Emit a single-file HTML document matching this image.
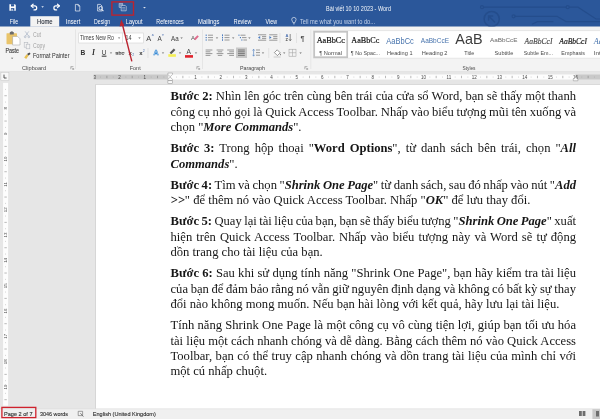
<!DOCTYPE html>
<html><head><meta charset="utf-8"><title>Word</title>
<style>
html,body{margin:0;padding:0;background:#e6e6e6;}
body{width:600px;height:419px;overflow:hidden;position:relative;font-family:"Liberation Sans",sans-serif;}
#app{position:absolute;left:0;top:0;width:600px;height:419px;overflow:hidden;background:#e6e6e6;}
.abs{position:absolute;}
#page{left:94.5px;top:83.7px;width:505.5px;height:325px;background:#fff;border-left:0.6px solid #d6d6d6;border-top:0.6px solid #dadada;}
#docwrap{position:absolute;left:0;top:0;width:600px;height:419px;will-change:transform;}
#doc{position:absolute;left:0;top:0;width:2400px;height:1676px;transform:scale(0.25);transform-origin:0 0;}
.ln{position:absolute;left:682px;height:62px;line-height:62px;font-family:"Liberation Serif",serif;font-size:50.4px;color:#161616;white-space:nowrap;}
#chrome{will-change:transform;position:absolute;left:0;top:0;width:600px;height:419px;}
#chrome text{font-family:"Liberation Sans",sans-serif;}
#chrome .sf{font-family:"Liberation Serif",serif;}
</style></head><body>
<div id="app">
<div id="page" class="abs"></div>
<div id="docwrap"><div id="doc">
<div class="ln" style="top:353.1px;word-spacing:-0.03px"><b>Bước 2:</b> Nhìn lên góc trên cùng bên trái của cửa sổ Word, bạn sẽ thấy một thanh</div>
<div class="ln" style="top:415.1px;word-spacing:-1.15px">công cụ nhỏ gọi là Quick Access Toolbar. Nhấp vào biểu tượng mũi tên xuống và</div>
<div class="ln" style="top:477.1px">chọn "<b><i>More Commands</i></b>".</div>
<div class="ln" style="top:561.1px;word-spacing:7.39px"><b>Bước 3:</b> Trong hộp thoại "<b>Word Options</b>", từ danh sách bên trái, chọn "<b><i>All</i></b></div>
<div class="ln" style="top:623.1px"><b><i>Commands</i></b>".</div>
<div class="ln" style="top:707.1px;word-spacing:-2.33px"><b>Bước 4:</b> Tìm và chọn "<b><i>Shrink One Page</i></b>" từ danh sách, sau đó nhấp vào nút "<b><i>Add</i></b></div>
<div class="ln" style="top:769.1px"><b><i>&gt;&gt;</i></b>" để thêm nó vào Quick Access Toolbar. Nhấp "<b><i>OK</i></b>" để lưu thay đổi.</div>
<div class="ln" style="top:853.1px;word-spacing:-2.76px"><b>Bước 5:</b> Quay lại tài liệu của bạn, bạn sẽ thấy biểu tượng "<b><i>Shrink One Page</i></b>" xuất</div>
<div class="ln" style="top:915.1px;word-spacing:3.67px">hiện trên Quick Access Toolbar. Nhấp vào biểu tượng này và Word sẽ tự động</div>
<div class="ln" style="top:977.1px">dồn trang cho tài liệu của bạn.</div>
<div class="ln" style="top:1061.1px;word-spacing:0.31px"><b>Bước 6:</b> Sau khi sử dụng tính năng "Shrink One Page", bạn hãy kiểm tra tài liệu</div>
<div class="ln" style="top:1123.1px;word-spacing:-2.02px">của bạn để đảm bảo rằng nó vẫn giữ nguyên định dạng và không có bất kỳ sự thay</div>
<div class="ln" style="top:1185.1px">đổi nào không mong muốn. Nếu bạn hài lòng với kết quả, hãy lưu lại tài liệu.</div>
<div class="ln" style="top:1269.1px;word-spacing:0.36px">Tính năng Shrink One Page là một công cụ vô cùng tiện lợi, giúp bạn tối ưu hóa</div>
<div class="ln" style="top:1331.1px;word-spacing:-0.08px">tài liệu một cách nhanh chóng và dễ dàng. Bằng cách thêm nó vào Quick Access</div>
<div class="ln" style="top:1393.1px;word-spacing:1.32px">Toolbar, bạn có thể truy cập nhanh chóng và dồn trang tài liệu của mình chỉ với</div>
<div class="ln" style="top:1453.1px">một cú nhấp chuột.</div>
</div></div>
<svg id="chrome" width="600" height="419" viewBox="0 0 600 419">
<g id="titlebar">
<rect x="0" y="0" width="600" height="26.7" fill="#2b579a"/>
<!-- decorative circuit pattern -->
<g fill="none" stroke="#244d8c" stroke-width="1.2" stroke-linecap="round">
<path d="M483.6 7.2 H566 M569.4 7.2 H578 L596 19 H600"/>
<circle cx="482" cy="7.2" r="1.5"/>
<circle cx="567.7" cy="7.2" r="1.5"/>
<path d="M515.2 16.3 H557 L566 21.6 H600"/>
<circle cx="513.6" cy="16.3" r="1.5"/>
<circle cx="491.7" cy="19" r="7.6" stroke-width="1.5"/>
<path d="M494.6 22 L488.6 16 M488.6 20 V16 H492.6" stroke-width="1.5"/>
<path d="M532.5 24 L537.4 21.6 H553"/>
</g>
<!-- save -->
<g>
<path d="M9.4 4.2 H14.9 L15.8 5.1 V10.7 H9.4 Z" fill="#fff"/>
<rect x="11" y="4.2" width="3.1" height="2.2" fill="#2b579a"/>
<rect x="10.9" y="8.1" width="3.4" height="2.6" fill="#2b579a"/>
<rect x="11.6" y="8.9" width="1" height="1.8" fill="#fff"/>
</g>
<!-- undo -->
<g fill="none" stroke="#fff" stroke-width="1.25" stroke-linecap="round" stroke-linejoin="round">
<path d="M31.4 5.9 H34.7 A2 2 0 0 1 34.7 9.9 H34"/>
<path d="M33.1 4.2 L31.2 5.9 L33.1 7.6"/>
</g>
<path d="M41.3 6.3 h2.6 l-1.3 1.5 z" fill="#e6ecf6"/>
<!-- redo -->
<g fill="none" stroke="#fff" stroke-width="1.25" stroke-linecap="round" stroke-linejoin="round">
<path d="M59.2 5.9 H55.9 A2 2 0 0 0 55.9 9.9 H56.6"/>
<path d="M57.5 4.2 L59.4 5.9 L57.5 7.6"/>
</g>
<!-- new doc -->
<g fill="none" stroke="#eef2f8" stroke-width="0.7" stroke-linejoin="round">
<path d="M75.4 4.4 H78.2 L79.8 6 V11 H75.4 Z"/>
<path d="M78.2 4.4 V6 H79.8"/>
</g>
<!-- print preview -->
<g fill="none" stroke="#eef2f8" stroke-width="0.7" stroke-linejoin="round">
<path d="M97.6 4.4 H100.4 L102 6 V11 H97.6 Z"/>
<circle cx="100.6" cy="8.2" r="1.7" stroke-width="0.9"/>
<path d="M101.9 9.5 L103.4 11.2" stroke-width="1.1"/>
</g>
<!-- shrink one page -->
<g fill="none" stroke="#d5deed" stroke-width="0.65" stroke-linejoin="round">
<path d="M119.2 3.4 H122.6 V7.4 H119.2 Z"/>
<path d="M121.2 5.4 H125.2 L126.2 6.4 V10.8 H121.2 Z" fill="#2b579a"/>
<path d="M122.2 7.6 H125 M122.2 9 H125" stroke-width="0.5"/>
<path d="M119.6 4.6 H122 M119.6 5.8 H121" stroke-width="0.5"/>
</g>
<path d="M143.1 6.9 h2.8 l-1.4 1.6 z" fill="#dfe6f2"/>
<!-- title text -->
<text x="326" y="10.7" font-size="6.8" fill="#f4f7fb" textLength="65" lengthAdjust="spacingAndGlyphs">Bài viết 10 10 2023 - Word</text>
<!-- tabs -->
<path d="M30.3 26.7 V16.2 H59.2 V26.7 Z" fill="#f3f3f3"/>
<g font-size="6.8" fill="#fff">
<text x="9.7" y="24.0" textLength="8.4" lengthAdjust="spacingAndGlyphs">File</text>
<text x="37" y="24.0" textLength="15.6" lengthAdjust="spacingAndGlyphs" fill="#2e3440" stroke="#2e3440" stroke-width="0.12">Home</text>
<text x="65.8" y="24.0" textLength="14.5" lengthAdjust="spacingAndGlyphs">Insert</text>
<text x="94" y="24.0" textLength="16.2" lengthAdjust="spacingAndGlyphs">Design</text>
<text x="125.8" y="24.0" textLength="16.7" lengthAdjust="spacingAndGlyphs">Layout</text>
<text x="156.3" y="24.0" textLength="27.5" lengthAdjust="spacingAndGlyphs">References</text>
<text x="198" y="24.0" textLength="21.5" lengthAdjust="spacingAndGlyphs">Mailings</text>
<text x="233.8" y="24.0" textLength="17.5" lengthAdjust="spacingAndGlyphs">Review</text>
<text x="265.5" y="24.0" textLength="11.5" lengthAdjust="spacingAndGlyphs">View</text>
<text x="300" y="23.7" font-size="6.5" fill="#c5d3ea" textLength="75" lengthAdjust="spacingAndGlyphs">Tell me what you want to do...</text>
</g>
<!-- light bulb -->
<g fill="none" stroke="#dfe6f2" stroke-width="0.7">
<path d="M292.9 22.6 C292.9 21.4 291.7 21 291.7 19.6 A2.2 2.2 0 0 1 296.1 19.6 C296.1 21 294.9 21.4 294.9 22.6 Z"/>
<path d="M293 23.8 H294.8"/>
</g>
</g>

<g id="ribbon">
<rect x="0" y="26.7" width="600" height="44.5" fill="#f3f3f3"/>
<rect x="0" y="71.1" width="600" height="0.5" fill="#dedede"/>
<!-- group separators -->
<g stroke="#dcdcdc" stroke-width="0.6">
<path d="M75.5 29.5 V69 M202.5 29.5 V69 M310.8 29.5 V69"/>
<path d="M148 48 V58 M268.7 48 V58 M280 33 V43 M296.5 33 V43" stroke="#d8d8d8"/>
</g>
<!-- Paste icon -->
<g transform="translate(0 1.6)">
<rect x="6.5" y="31.6" width="10.5" height="11" rx="0.6" fill="#e9c46a"/>
<rect x="9.8" y="30.3" width="4" height="2.6" rx="0.5" fill="#6b6b6b"/>
<rect x="10.8" y="29.8" width="2" height="1.2" fill="#6b6b6b"/>
<path d="M12.6 34.8 H17.6 L20 37.2 V43.4 H12.6 Z" fill="#fff" stroke="#9a9a9a" stroke-width="0.5"/>
</g>
<text x="5.5" y="53" font-size="6.5" fill="#303030" stroke="#303030" stroke-width="0.1" textLength="13.5" lengthAdjust="spacingAndGlyphs">Paste</text>
<path d="M10.9 57.7 h2.4 l-1.2 1.4 z" fill="#666"/>
<!-- Cut -->
<g stroke="#a9b4c6" stroke-width="0.7" fill="none">
<path d="M25.2 31.4 L28.6 36 M28.8 31.4 L25.4 36"/>
<circle cx="25.2" cy="36.8" r="0.9"/><circle cx="28.8" cy="36.8" r="0.9"/>
</g>
<text x="33" y="36.5" font-size="6.5" fill="#a3a3a3" textLength="8" lengthAdjust="spacingAndGlyphs">Cut</text>
<!-- Copy -->
<g stroke="#b5b9c0" stroke-width="0.6" fill="#f3f3f3">
<rect x="24.2" y="42.6" width="3.6" height="4.6"/>
<rect x="26.2" y="44.2" width="3.6" height="4.6"/>
</g>
<text x="33" y="47.8" font-size="6.5" fill="#a3a3a3" textLength="12" lengthAdjust="spacingAndGlyphs">Copy</text>
<!-- Format painter -->
<g>
<path d="M24.2 57.6 L26.6 54.2 L28.6 55.6 L26.2 59 Z" fill="#e8c052"/>
<path d="M27 54 L29.4 52.4 L30.6 53.8 L28.6 55.6 Z" fill="#4b4b4b"/>
</g>
<text x="33" y="58.3" font-size="6.5" fill="#2f2f2f" textLength="36.5" lengthAdjust="spacingAndGlyphs">Format Painter</text>
<text x="22" y="69.6" font-size="6.2" fill="#484848" textLength="24" lengthAdjust="spacingAndGlyphs">Clipboard</text>
<path d="M70.8 66.6 H73.4 M70.8 66.6 V69.2 M71.8 67.6 L73.6 69.4 M73.6 68 V69.4 H72.2" stroke="#777" stroke-width="0.5" fill="none"/>
<!-- Font boxes -->
<rect x="78.7" y="33" width="43.8" height="10" fill="#fff" stroke="#d4d4d4" stroke-width="0.6"/>
<rect x="122.5" y="33" width="20.8" height="10" fill="#fff" stroke="#d4d4d4" stroke-width="0.6"/>
<text x="80" y="40.1" font-size="6.5" fill="#3a3a3a" textLength="34" lengthAdjust="spacingAndGlyphs">Times New Ro</text>
<path d="M117.9 37.4 h2.4 l-1.2 1.4 z" fill="#666"/>
<text x="125.4" y="40.1" font-size="6.5" fill="#3a3a3a" textLength="6" lengthAdjust="spacingAndGlyphs">14</text>
<path d="M138.3 37.4 h2.4 l-1.2 1.4 z" fill="#666"/>
<!-- grow/shrink font -->
<text x="146.2" y="41" font-size="7.4" fill="#3d3d3d">A</text>
<path d="M151.6 35.6 l1.2 -1.5 l1.2 1.5 z" fill="#4a6fb0"/>
<text x="157.4" y="41" font-size="6.4" fill="#3d3d3d">A</text>
<path d="M161.8 34.4 l1.1 1.4 l1.1 -1.4 z" fill="#4a6fb0"/>
<text x="171" y="40.6" font-size="6.4" fill="#3d3d3d" textLength="7.6" lengthAdjust="spacingAndGlyphs">Aa</text>
<path d="M180.4 37.4 h2.4 l-1.2 1.4 z" fill="#666"/>
<!-- clear formatting -->
<text x="191" y="40.4" font-size="6" fill="#555">A</text>
<path d="M194 38.8 L197.4 35.2 L198.8 36.6 L195.4 40.2 Z" fill="#e06a8c"/>
<!-- row 2 -->
<text x="80.6" y="55" font-size="6.6" font-weight="bold" fill="#333">B</text>
<text x="92" y="55.2" font-size="7.6" font-style="italic" font-weight="bold" class="sf" fill="#333">I</text>
<text x="101.8" y="54.8" font-size="6.4" fill="#333" text-decoration="underline">U</text>
<path d="M101.8 56.2 H106.4" stroke="#333" stroke-width="0.6"/>
<path d="M109.8 52.4 h2.4 l-1.2 1.4 z" fill="#666"/>
<text x="115.6" y="54.6" font-size="5.2" fill="#444" textLength="8.6" lengthAdjust="spacingAndGlyphs">abc</text>
<path d="M115 52.9 H124.8" stroke="#444" stroke-width="0.6"/>
<text x="128.6" y="54.8" font-size="6" font-weight="bold" fill="#333">x</text>
<text x="132.2" y="56.4" font-size="3.6" fill="#4a6fb0">2</text>
<text x="139.2" y="54.8" font-size="6" font-weight="bold" fill="#333">x</text>
<text x="142.8" y="52.2" font-size="3.6" fill="#4a6fb0">2</text>
<!-- glow A -->
<text x="153.6" y="55.2" font-size="7" font-weight="bold" fill="#fff" stroke="#3a8bd4" stroke-width="0.6">A</text>
<path d="M161.8 52.4 h2.4 l-1.2 1.4 z" fill="#666"/>
<!-- highlight -->
<path d="M169.6 52.8 L173.8 48.6 L175.4 50 L171.2 54.2 Z" fill="#5a5a5a"/>
<rect x="168.3" y="54.2" width="7.6" height="2.6" fill="#f5ef55"/>
<path d="M178.8 52.4 h2.4 l-1.2 1.4 z" fill="#666"/>
<!-- font color -->
<text x="186.6" y="53.8" font-size="6.6" fill="#444">A</text>
<rect x="185" y="55.1" width="8" height="2.6" fill="#e0222b"/>
<path d="M194.8 52.4 h2.4 l-1.2 1.4 z" fill="#666"/>
<text x="129.7" y="69.6" font-size="6.2" fill="#484848" textLength="11" lengthAdjust="spacingAndGlyphs">Font</text>
<path d="M196.8 66.6 H199.4 M196.8 66.6 V69.2 M197.8 67.6 L199.6 69.4 M199.6 68 V69.4 H198.2" stroke="#777" stroke-width="0.5" fill="none"/>
<!-- Paragraph row 1 -->
<g stroke="#5a5a5a" stroke-width="0.6" fill="none">
<path d="M208 35.2 H213 M208 37.6 H213 M208 40 H213"/>
<path d="M224.5 35.2 H229.5 M224.5 37.6 H229.5 M224.5 40 H229.5"/>
<path d="M240.5 35.2 H245.5 M242 37.6 H246.5 M243.4 40 H247"/>
<path d="M258 34.8 H266.2 M262 36.6 H266.2 M262 38.4 H266.2 M258 40.2 H266.2"/>
<path d="M269.2 34.8 H277.4 M273.2 36.6 H277.4 M273.2 38.4 H277.4 M269.2 40.2 H277.4"/>
</g>
<g fill="#4a7cc0">
<rect x="205.6" y="34.6" width="1.2" height="1.2"/><rect x="205.6" y="37" width="1.2" height="1.2"/><rect x="205.6" y="39.4" width="1.2" height="1.2"/>
<rect x="222" y="34.4" width="1" height="1.6"/><rect x="222" y="36.8" width="1" height="1.6"/><rect x="222" y="39.2" width="1" height="1.6"/>
<rect x="238.4" y="34.6" width="1.1" height="1.2"/><rect x="239.9" y="37" width="1.1" height="1.2"/><rect x="241.3" y="39.4" width="1.1" height="1.2"/>
<path d="M258 37.5 l2.2 -1.5 v3 z M271.6 37.5 l-2.2 -1.5 v3 z"/>
</g>
<g fill="#666">
<path d="M215.8 37.4 h2.4 l-1.2 1.4 z"/><path d="M232 37.4 h2.4 l-1.2 1.4 z"/><path d="M248.2 37.4 h2.4 l-1.2 1.4 z"/>
</g>
<!-- sort -->
<text x="285.4" y="37.2" font-size="4" font-weight="bold" fill="#4a6fb0">A</text>
<text x="285.4" y="41.2" font-size="4" font-weight="bold" fill="#444">Z</text>
<path d="M290.2 34 V40.6 M289 39.2 L290.2 40.8 L291.4 39.2" stroke="#444" stroke-width="0.6" fill="none"/>
<!-- pilcrow -->
<text x="300.4" y="40.6" font-size="7.4" fill="#444">¶</text>
<!-- Paragraph row 2 -->
<rect x="236" y="47.5" width="11" height="10.5" fill="#c8c8c8"/>
<g stroke="#5a5a5a" stroke-width="0.6" fill="none">
<path d="M205.6 50 H212.4 M205.6 51.8 H210.4 M205.6 53.6 H212.4 M205.6 55.4 H210.4"/>
<path d="M216.6 50 H223.4 M217.8 51.8 H222.2 M216.6 53.6 H223.4 M217.8 55.4 H222.2"/>
<path d="M227.2 50 H234 M229.2 51.8 H234 M227.2 53.6 H234 M229.2 55.4 H234"/>
<path d="M238 50 H244.8 M238 51.8 H244.8 M238 53.6 H244.8 M238 55.4 H244.8" stroke="#444"/>
<path d="M256 50 H260 M256 52.6 H260 M256 55.2 H260"/>
</g>
<path d="M253.6 49.4 V56 M252.6 50.6 L253.6 49.2 L254.6 50.6 M252.6 54.8 L253.6 56.2 L254.6 54.8" stroke="#4a7cc0" stroke-width="0.6" fill="none"/>
<path d="M261.8 52.4 h2.4 l-1.2 1.4 z" fill="#666"/>
<!-- shading -->
<path d="M274.4 52.6 L277.2 49.8 L280.2 52.8 L277.4 55.6 Z" fill="#fff" stroke="#555" stroke-width="0.6"/>
<path d="M280.4 53.4 q1 1.6 0 2.2 q-1 -0.6 0 -2.2z" fill="#555"/>
<rect x="273.6" y="56.2" width="7" height="1.6" fill="#d9d9d9"/>
<path d="M283 52.4 h2.4 l-1.2 1.4 z" fill="#666"/>
<!-- borders -->
<g stroke="#9a9a9a" stroke-width="0.5" fill="none">
<rect x="289" y="49.2" width="7" height="7"/>
<path d="M292.5 49.2 V56.2 M289 52.7 H296"/>
</g>
<path d="M299.4 52.4 h2.4 l-1.2 1.4 z" fill="#666"/>
<text x="240" y="69.6" font-size="6.2" fill="#484848" textLength="25" lengthAdjust="spacingAndGlyphs">Paragraph</text>
<path d="M304.8 66.6 H307.4 M304.8 66.6 V69.2 M305.8 67.6 L307.6 69.4 M307.6 68 V69.4 H306.2" stroke="#777" stroke-width="0.5" fill="none"/>
<!-- Styles gallery -->
<rect x="313.3" y="30.8" width="290" height="27.3" fill="#fff" stroke="#d6d6d6" stroke-width="0.5"/>
<rect x="314.2" y="31.8" width="33" height="25.4" fill="#fff" stroke="#c4c4c4" stroke-width="1.7"/>
<g class="sf" font-size="8.4" fill="#111" stroke="#111" stroke-width="0.18">
<text class="sf" x="316.7" y="43.1" textLength="28.3" lengthAdjust="spacingAndGlyphs">AaBbCc</text>
<text class="sf" x="351.3" y="43.1" textLength="28" lengthAdjust="spacingAndGlyphs">AaBbCc</text>
</g>
<text x="386.3" y="43.6" font-size="8.6" fill="#4874ad" textLength="27.5" lengthAdjust="spacingAndGlyphs">AaBbCc</text>
<text x="420.8" y="43" font-size="7" fill="#4874ad" textLength="28.2" lengthAdjust="spacingAndGlyphs">AaBbCcE</text>
<text x="455.3" y="44" font-size="14.6" fill="#3c3c3c" textLength="27.2" lengthAdjust="spacingAndGlyphs">AaB</text>
<text x="490" y="42.4" font-size="5.6" fill="#6a6a6a" textLength="27.5" lengthAdjust="spacingAndGlyphs">AaBbCcE</text>
<text class="sf" x="524.5" y="43.5" font-size="8.2" font-style="italic" fill="#4a4a4a" stroke="#4a4a4a" stroke-width="0.15" textLength="28" lengthAdjust="spacingAndGlyphs">AaBbCcI</text>
<text class="sf" x="559.3" y="43.5" font-size="8.2" font-style="italic" fill="#1e1e1e" stroke="#1e1e1e" stroke-width="0.2" textLength="27.7" lengthAdjust="spacingAndGlyphs">AaBbCcI</text>
<text class="sf" x="593.8" y="43.5" font-size="8.2" font-style="italic" fill="#4874ad">Aa</text>
<g font-size="6.2" fill="#4a4a4a">
<text x="319.2" y="55.1" textLength="22.8" lengthAdjust="spacingAndGlyphs">¶ Normal</text>
<text x="350.8" y="55.1" textLength="29.2" lengthAdjust="spacingAndGlyphs">¶ No Spac...</text>
<text x="387" y="55.1" textLength="25.5" lengthAdjust="spacingAndGlyphs">Heading 1</text>
<text x="421.8" y="55.1" textLength="25.7" lengthAdjust="spacingAndGlyphs">Heading 2</text>
<text x="464.3" y="55.1" textLength="10" lengthAdjust="spacingAndGlyphs">Title</text>
<text x="494.5" y="55.1" textLength="18.8" lengthAdjust="spacingAndGlyphs">Subtitle</text>
<text x="523.8" y="55.1" textLength="29.2" lengthAdjust="spacingAndGlyphs">Subtle Em...</text>
<text x="561.3" y="55.1" textLength="23.7" lengthAdjust="spacingAndGlyphs">Emphasis</text>
<text x="593.8" y="55.1">Int</text>
</g>
<text x="462.5" y="69.6" font-size="6.2" fill="#484848" textLength="13" lengthAdjust="spacingAndGlyphs">Styles</text>
</g>

<g id="rulers">
<rect x="0.9" y="72.3" width="8" height="8.4" fill="#f7f7f7" stroke="#c4c4c4" stroke-width="0.5"/>
<path d="M4 74.6 V78 H6.6" stroke="#444" stroke-width="0.9" fill="none"/>
<rect x="93.7" y="74.5" width="74.8" height="5" fill="#c9c9c9"/>
<rect x="168.5" y="74.5" width="407.0" height="5" fill="#fdfdfd"/>
<rect x="575.5" y="74.5" width="24.5" height="5" fill="#c9c9c9"/>
<path d="M106.88 75.8 V78.2 M132.20 75.8 V78.2 M157.53 75.8 V78.2 M182.86 75.8 V78.2 M208.19 75.8 V78.2 M233.52 75.8 V78.2 M258.86 75.8 V78.2 M284.18 75.8 V78.2 M309.51 75.8 V78.2 M334.84 75.8 V78.2 M360.17 75.8 V78.2 M385.50 75.8 V78.2 M410.83 75.8 V78.2 M436.16 75.8 V78.2 M461.49 75.8 V78.2 M486.82 75.8 V78.2 M512.15 75.8 V78.2 M537.48 75.8 V78.2 M562.81 75.8 V78.2 M588.14 75.8 V78.2" stroke="#777" stroke-width="0.5"/>
<path d="M100.54 76.7 V77.4 M113.21 76.7 V77.4 M125.87 76.7 V77.4 M138.54 76.7 V77.4 M151.20 76.7 V77.4 M163.87 76.7 V77.4 M176.53 76.7 V77.4 M189.20 76.7 V77.4 M201.86 76.7 V77.4 M214.53 76.7 V77.4 M227.19 76.7 V77.4 M239.86 76.7 V77.4 M252.52 76.7 V77.4 M265.19 76.7 V77.4 M277.85 76.7 V77.4 M290.52 76.7 V77.4 M303.18 76.7 V77.4 M315.85 76.7 V77.4 M328.51 76.7 V77.4 M341.18 76.7 V77.4 M353.84 76.7 V77.4 M366.51 76.7 V77.4 M379.17 76.7 V77.4 M391.84 76.7 V77.4 M404.50 76.7 V77.4 M417.17 76.7 V77.4 M429.83 76.7 V77.4 M442.50 76.7 V77.4 M455.16 76.7 V77.4 M467.83 76.7 V77.4 M480.49 76.7 V77.4 M493.16 76.7 V77.4 M505.82 76.7 V77.4 M518.49 76.7 V77.4 M531.15 76.7 V77.4 M543.82 76.7 V77.4 M556.48 76.7 V77.4 M569.15 76.7 V77.4 M581.81 76.7 V77.4 M594.48 76.7 V77.4" stroke="#8a8a8a" stroke-width="0.5"/>
<g font-size="4.5" fill="#4a4a4a" text-anchor="middle">
<text x="94.81" y="78.8">3</text>
<text x="119.54" y="78.8">2</text>
<text x="144.87" y="78.8">1</text>
<text x="195.53" y="78.8">1</text>
<text x="220.86" y="78.8">2</text>
<text x="246.19" y="78.8">3</text>
<text x="271.52" y="78.8">4</text>
<text x="296.85" y="78.8">5</text>
<text x="322.18" y="78.8">6</text>
<text x="347.51" y="78.8">7</text>
<text x="372.84" y="78.8">8</text>
<text x="398.17" y="78.8">9</text>
<text x="423.50" y="78.8">10</text>
<text x="448.83" y="78.8">11</text>
<text x="474.16" y="78.8">12</text>
<text x="499.49" y="78.8">13</text>
<text x="524.82" y="78.8">14</text>
<text x="550.15" y="78.8">15</text>
<text x="575.48" y="78.8">16</text>
</g>
<g fill="#fafafa" stroke="#8c8c8c" stroke-width="0.5">
<path d="M167.9 73 H172.5 V74.4 L170.2 76.8 L167.9 74.4 Z"/>
<path d="M170.2 77 L172.5 79.4 V80.6 H167.9 V79.4 Z"/>
<rect x="167.9" y="80.8" width="4.6" height="2.6"/>
<path d="M575.6 77 L577.9 79.4 V80.8 H573.3 V79.4 Z"/>
</g>
<rect x="3.1" y="82.9" width="5" height="322.8" fill="#fdfdfd"/>
<path d="M4.4 95.74 H6.8 M4.4 121.06 H6.8 M4.4 146.40 H6.8 M4.4 171.72 H6.8 M4.4 197.06 H6.8 M4.4 222.38 H6.8 M4.4 247.72 H6.8 M4.4 273.04 H6.8 M4.4 298.38 H6.8 M4.4 323.70 H6.8 M4.4 349.03 H6.8 M4.4 374.37 H6.8 M4.4 399.69 H6.8" stroke="#777" stroke-width="0.5"/>
<path d="M5.3 89.40 H6 M5.3 102.07 H6 M5.3 114.73 H6 M5.3 127.40 H6 M5.3 140.06 H6 M5.3 152.73 H6 M5.3 165.39 H6 M5.3 178.06 H6 M5.3 190.72 H6 M5.3 203.39 H6 M5.3 216.05 H6 M5.3 228.72 H6 M5.3 241.38 H6 M5.3 254.05 H6 M5.3 266.71 H6 M5.3 279.38 H6 M5.3 292.04 H6 M5.3 304.71 H6 M5.3 317.37 H6 M5.3 330.04 H6 M5.3 342.70 H6 M5.3 355.37 H6 M5.3 368.03 H6 M5.3 380.70 H6 M5.3 393.36 H6" stroke="#8a8a8a" stroke-width="0.5"/>
<g font-size="4.4" fill="#4a4a4a" text-anchor="middle">
<text transform="translate(7.2 108.40) rotate(-90)">8</text>
<text transform="translate(7.2 133.73) rotate(-90)">9</text>
<text transform="translate(7.2 159.06) rotate(-90)">10</text>
<text transform="translate(7.2 184.39) rotate(-90)">11</text>
<text transform="translate(7.2 209.72) rotate(-90)">12</text>
<text transform="translate(7.2 235.05) rotate(-90)">13</text>
<text transform="translate(7.2 260.38) rotate(-90)">14</text>
<text transform="translate(7.2 285.71) rotate(-90)">15</text>
<text transform="translate(7.2 311.04) rotate(-90)">16</text>
<text transform="translate(7.2 336.37) rotate(-90)">17</text>
<text transform="translate(7.2 361.70) rotate(-90)">18</text>
<text transform="translate(7.2 387.03) rotate(-90)">19</text>
</g>
</g>
<g id="status">
<rect x="0" y="408.8" width="600" height="10.2" fill="#f0f0f0"/>
<rect x="0" y="408.6" width="600" height="0.6" fill="#dadada"/>
<g font-size="6.1" fill="#2e2e2e" stroke="#2e2e2e" stroke-width="0.12">
<text x="4" y="416.2" textLength="28.5" lengthAdjust="spacingAndGlyphs">Page 2 of 7</text>
<text x="40" y="416.2" textLength="28" lengthAdjust="spacingAndGlyphs">3046 words</text>
<text x="92.8" y="416.2" textLength="63" lengthAdjust="spacingAndGlyphs">English (United Kingdom)</text>
</g>
<g fill="none" stroke="#666" stroke-width="0.6">
<path d="M78.2 411.3 H82.6 V415.6 H78.2 Z"/>
<path d="M80.4 413.2 L83.4 416.6" stroke-width="0.8"/>
</g>
<rect x="592.4" y="409.2" width="7.6" height="9.8" fill="#c8c8c8"/>
<g fill="#6e6e6e">
<path d="M579 411 h2.8 v5 h-2.8 z M582.6 411 h2.8 v5 h-2.8 z"/>
<rect x="596" y="411" width="3" height="5.5"/>
</g>
</g>

<g id="annot">
<rect x="111.9" y="1.9" width="21.6" height="13.2" fill="none" stroke="#bb2430" stroke-width="1.4"/>
<path d="M131.8 61.3 L122.3 24" stroke="#bb2430" stroke-width="1.4" fill="none"/>
<path d="M121.2 19.6 L124.4 25.6 L119.6 26.6 Z" fill="#bb2430"/>
<rect x="1.9" y="407.4" width="33.9" height="10.2" fill="none" stroke="#cf222d" stroke-width="1.3"/>
</g>

</svg>
</div>
</body></html>
